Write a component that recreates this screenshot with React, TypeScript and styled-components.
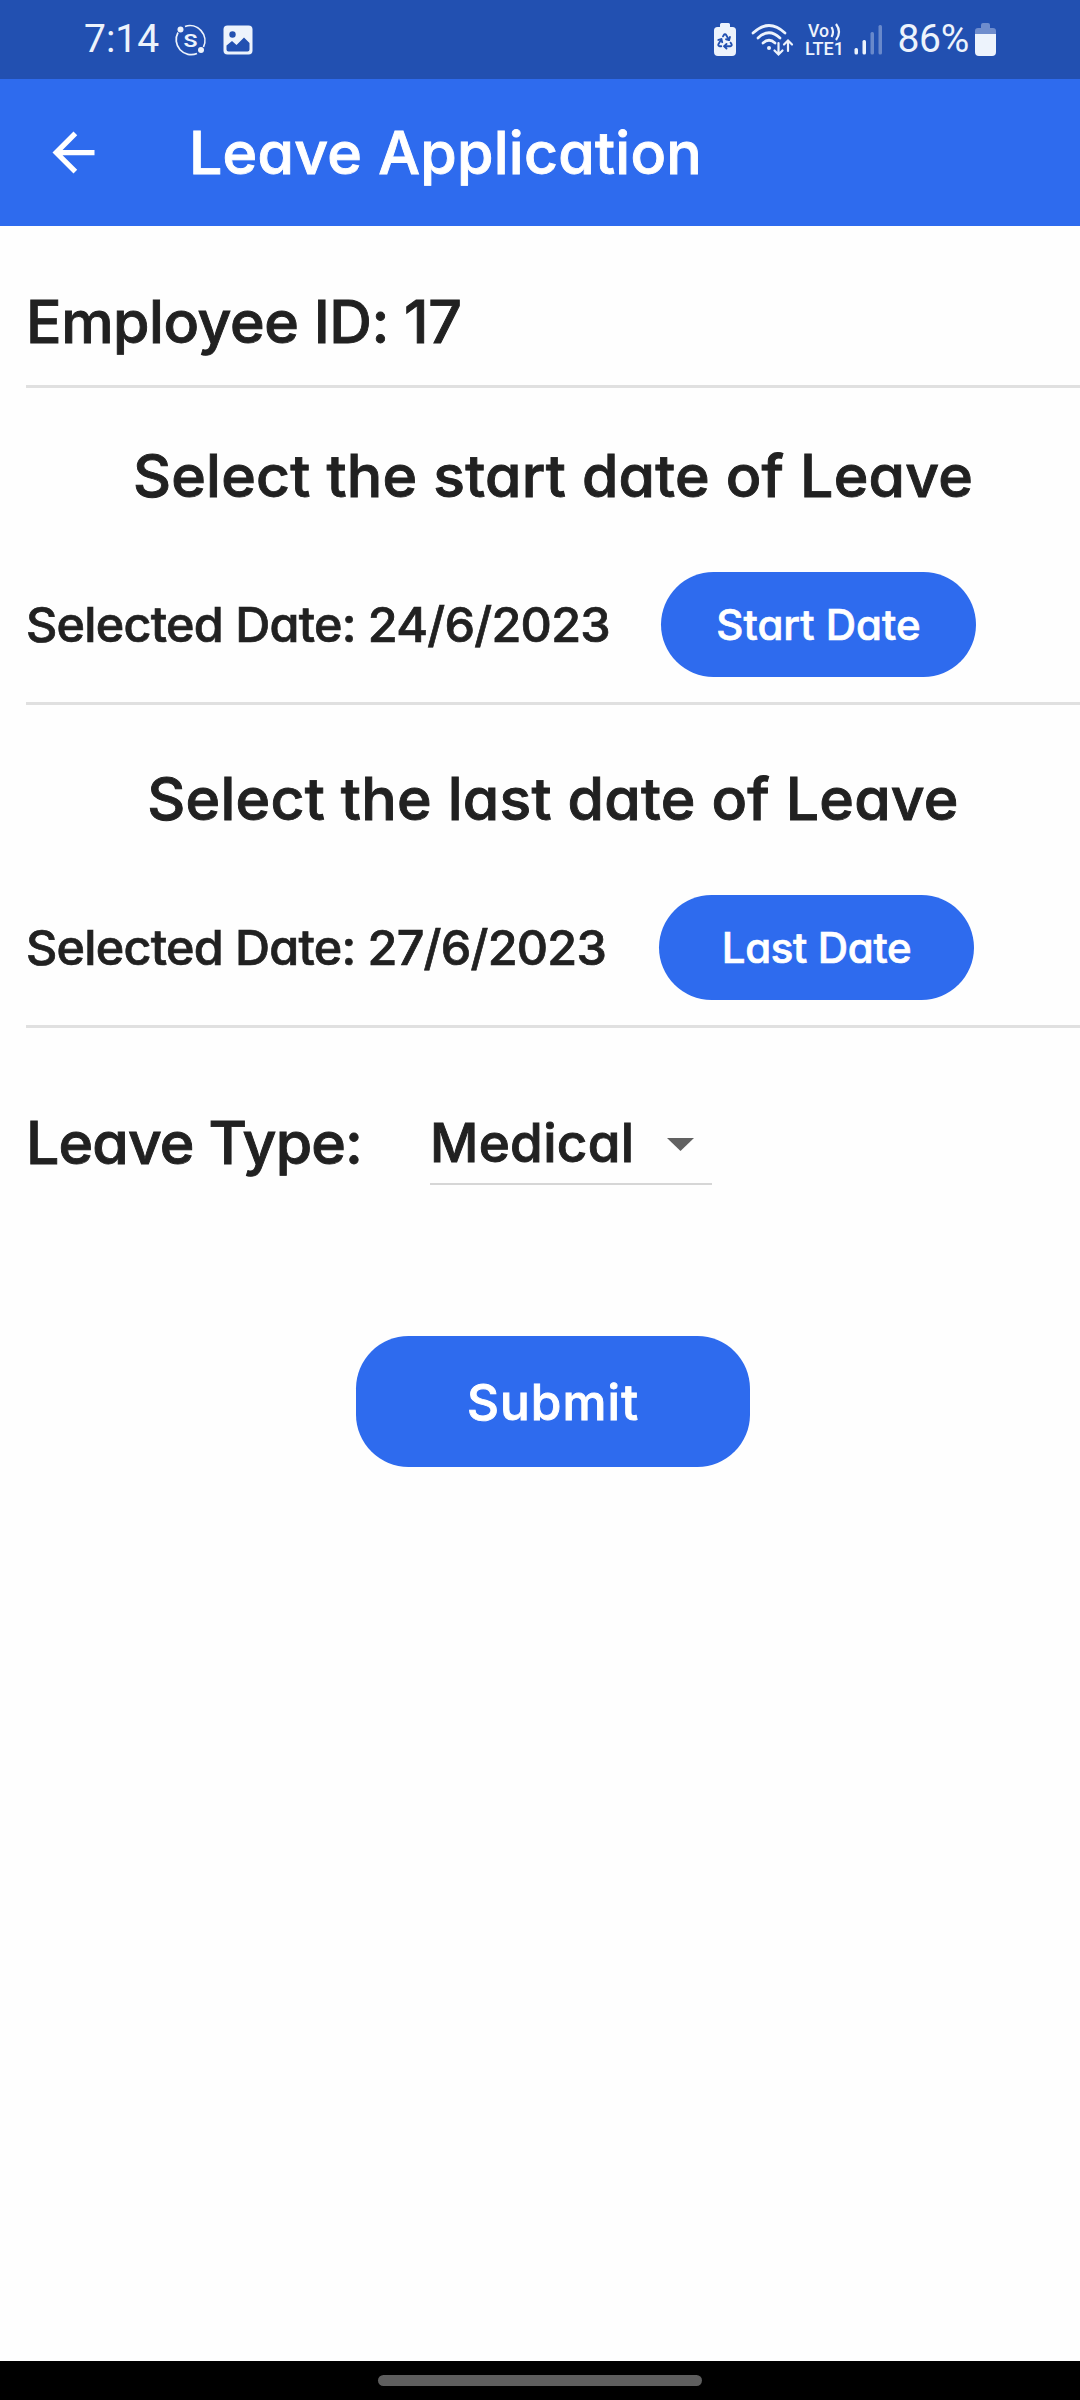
import React from 'react';
import styled, { createGlobalStyle } from 'styled-components';
import { Recycle } from 'lucide-react';

const ink = '#212121';
const blue = '#2e6bee';
const deepBlue = '#2250b1';
const pale = '#edf3fc';

const GlobalStyle = createGlobalStyle`
  * { box-sizing: border-box; }
  body { margin: 0; background: #fff; }
`;

const Screen = styled.div`
  width: 1080px;
  height: 2400px;
  display: flex;
  flex-direction: column;
  background: #fefefe;
  color: ${ink};
  font-family: Inter, 'Liberation Sans', sans-serif;
  font-feature-settings: 'cv11', 'calt' 0;
  overflow: hidden;
`;

const StatusBar = styled.div`
  height: 79px;
  display: flex;
  align-items: center;
  justify-content: space-between;
  padding: 0 84px;
  background: ${deepBlue};
  color: ${pale};
  font-family: Roboto, sans-serif;
`;

const StatusGroup = styled.div`
  display: flex;
  align-items: center;
`;

const StatusText = styled.span<{ $spacing?: number; $left?: number }>`
  margin-left: ${(p) => p.$left ?? 0}px;
  font-size: 39px;
  line-height: 79px;
  white-space: nowrap;
  letter-spacing: ${(p) => p.$spacing ?? 0}px;
`;

const StatusIcon = styled.svg<{ $left: number }>`
  display: block;
  flex: none;
  margin-left: ${(p) => p.$left}px;
  overflow: visible;
`;

const AppBar = styled.header`
  height: 147px;
  display: flex;
  align-items: center;
  padding-left: 42px;
  background: ${blue};
  color: #fff;
`;

const BackIcon = styled.svg`
  display: block;
  width: 63px;
  height: 63px;
  margin-right: 84px;
`;

const Title = styled.h1<{ $spacing: number }>`
  margin: 0;
  font-size: 59px;
  font-weight: 500;
  line-height: 90px;
  white-space: nowrap;
  letter-spacing: ${(p) => p.$spacing}px;
  -webkit-text-stroke: 0.9px currentColor;
`;

const Content = styled.main`
  flex: 1;
  padding-left: 26px;
  display: flex;
  flex-direction: column;
`;

const Section = styled.section<{ $top: number; $bottom?: number }>`
  display: flex;
  flex-direction: column;
  padding: ${(p) => p.$top}px 0 ${(p) => p.$bottom ?? 25}px;
  border-bottom: 3px solid #e0e0e0;
`;

const Heading = styled.h2<{ $spacing: number; $centered?: boolean }>`
  margin: 0;
  font-size: 59px;
  font-weight: 500;
  line-height: 90px;
  white-space: nowrap;
  text-align: ${(p) => (p.$centered ? 'center' : 'left')};
  letter-spacing: ${(p) => p.$spacing}px;
  -webkit-text-stroke: 0.9px currentColor;
`;

const DateRow = styled.div`
  display: flex;
  align-items: center;
  height: 105px;
  margin-top: 51px;
`;

const DateText = styled.div<{ $width: number; $spacing: number }>`
  width: ${(p) => p.$width}px;
  font-size: 48.5px;
  font-weight: 500;
  white-space: nowrap;
  letter-spacing: ${(p) => p.$spacing}px;
  -webkit-text-stroke: 0.7px currentColor;
`;

const PillButton = styled.button<{ $spacing: number }>`
  width: 315px;
  height: 105px;
  padding: 0;
  border: 0;
  border-radius: 52.5px;
  background: ${blue};
  color: #fff;
  font: 500 42px Inter, sans-serif;
  font-feature-settings: inherit;
  white-space: nowrap;
  letter-spacing: ${(p) => p.$spacing}px;
  -webkit-text-stroke: 0.7px currentColor;
`;

const TypeRow = styled.div`
  display: flex;
  height: 87px;
  margin-top: 70px;
  align-items: stretch;
`;

const TypeLabel = styled.div`
  width: 404px;
`;

const Select = styled.div`
  width: 282px;
  display: flex;
  align-items: center;
  justify-content: space-between;
  padding: 4px 18px 0 0;
  border-bottom: 2px solid #d6d6d6;
`;

const SelectValue = styled.span<{ $spacing: number }>`
  font-size: 53px;
  font-weight: 500;
  line-height: 80px;
  letter-spacing: ${(p) => p.$spacing}px;
  -webkit-text-stroke: 0.9px currentColor;
`;

const Caret = styled.svg`
  display: block;
  margin-top: 4px;
`;

const SubmitButton = styled(PillButton)`
  width: 394px;
  height: 131px;
  margin: 151px auto 0;
  font-size: 49.5px;
  -webkit-text-stroke: 0.9px currentColor;
`;

const NavBar = styled.footer`
  height: 39px;
  display: flex;
  justify-content: center;
  padding-top: 14px;
  background: #000;
`;

const HomeHandle = styled.div`
  width: 324px;
  height: 11px;
  border-radius: 5.5px;
  background: #5e5e5e;
`;

function NotificationIcons() {
  return (
    <>
      <StatusIcon $left={16} width="32" height="32" viewBox="0 0 32 32" fill="none" stroke={pale} strokeWidth="1.700">
        <path d="M10 2.500A15 15 0 0 1 28.500 23M22 29.500A15 15 0 0 1 3 8.500" />
        <circle cx="5.500" cy="5.500" r="3" fill={pale} stroke="none" />
        <circle cx="26" cy="26" r="3" fill={pale} stroke="none" />
        <text x="8.500" y="22.500" fill={pale} stroke="none" fontFamily="Roboto, sans-serif" fontWeight="600" fontSize="19" textLength="14" lengthAdjust="spacingAndGlyphs">S</text>
      </StatusIcon>
      <StatusIcon $left={16} width="30" height="30" viewBox="0 0 30 30">
        <rect x="0.500" y="0.500" width="29" height="29" rx="4" fill={pale} />
        <circle cx="9.500" cy="9.500" r="3.200" fill={deepBlue} />
        <path d="M3.500 20.500L9 16L13.500 20L21 12.500L26.500 18V24.500Q26.500 26.500 24.500 26.500H5.500Q3.500 26.500 3.500 24.500Z" fill={deepBlue} />
      </StatusIcon>
    </>
  );
}

function SystemIcons() {
  return (
    <StatusGroup>
      <StatusIcon $left={0} width="22" height="33" viewBox="0 0 22 33" fill="none">
        <path d="M6 4V1.500Q6 0 7.500 0H14.500Q16 0 16 1.500V4H18.500Q22 4 22 7.500V29Q22 33 18 33H4Q0 33 0 29V7.500Q0 4 3.500 4Z" fill={pale} />
        <Recycle x={2} y={9} size={18} color={deepBlue} strokeWidth={2.5} />
      </StatusIcon>
      <StatusIcon $left={15} width="43" height="34" viewBox="0 0 43 34" fill="none" stroke={pale} strokeWidth="2.700" strokeLinecap="round">
        <path d="M2 10Q18 -5 34 10M7 15Q18 4.500 29 15M12 20Q18 14.500 24 20" />
        <circle cx="18" cy="25" r="2" fill={pale} stroke="none" />
        <path d="M27.500 20V31M23.500 27.500L27.500 31.500L31.500 27.500M37 28V18M33 21.500L37 17.500L41 21.500" strokeWidth="2.200" />
      </StatusIcon>
      <StatusIcon $left={11} width="40" height="34" viewBox="0 0 40 34" fill={pale} fontFamily="Roboto, sans-serif" fontWeight="500">
        <text x="3" y="14" fontSize="17.500" textLength="21" lengthAdjust="spacingAndGlyphs">Vo</text>
        <path d="M26.500 4Q29.500 9 26.500 14M31 1Q37 9 31 17" fill="none" stroke={pale} strokeWidth="2.200" />
        <text x="0" y="32" fontSize="18.500" textLength="39" lengthAdjust="spacingAndGlyphs">LTE1</text>
      </StatusIcon>
      <StatusIcon $left={9} width="29" height="30" viewBox="0 0 29 30" fill={pale}>
        <rect x="0.500" y="23" width="3.500" height="6.500" rx="1.500" />
        <rect x="8.500" y="15" width="3.500" height="14.500" rx="1.500" />
        <rect x="16.500" y="7" width="3.500" height="22.500" rx="1.500" opacity=".35" />
        <rect x="24.500" y="0" width="3.500" height="29.500" rx="1.500" opacity=".35" />
      </StatusIcon>
      <StatusText $left={14} $spacing={-0.3}>86%</StatusText>
      <StatusIcon $left={6} width="21" height="33" viewBox="0 0 21 33" fill={pale}>
        <path d="M0 11V8Q0 5 3 5H6V2Q6 0 8 0H13Q15 0 15 2V5H18Q21 5 21 8V11Z" opacity=".38" />
        <path d="M0 11H21V29Q21 33 17 33H4Q0 33 0 29Z" />
      </StatusIcon>
    </StatusGroup>
  );
}

export default function App() {
  return (
    <Screen>
      <GlobalStyle />
      <StatusBar>
        <StatusGroup>
          <StatusText>7:14</StatusText>
          <NotificationIcons />
        </StatusGroup>
        <SystemIcons />
      </StatusBar>
      <AppBar>
        <BackIcon viewBox="0 0 24 24" fill="#fff">
          <path d="M20 11H7.830l5.590-5.590L12 4l-8 8 8 8 1.410-1.410L7.830 13H20v-2z" />
        </BackIcon>
        <Title $spacing={0.25}>Leave Application</Title>
      </AppBar>
      <Content>
        <Section $top={51} $bottom={18}>
          <Heading $spacing={-0.45}>Employee ID: 17</Heading>
        </Section>
        <Section $top={43}>
          <Heading $centered $spacing={0.2}>Select the start date of Leave</Heading>
          <DateRow>
            <DateText $width={635} $spacing={-0.75}>Selected Date: 24/6/2023</DateText>
            <PillButton $spacing={0}>Start Date</PillButton>
          </DateRow>
        </Section>
        <Section $top={49}>
          <Heading $centered $spacing={0.2}>Select the last date of Leave</Heading>
          <DateRow>
            <DateText $width={633} $spacing={-0.77}>Selected Date: 27/6/2023</DateText>
            <PillButton $spacing={-0.35}>Last Date</PillButton>
          </DateRow>
        </Section>
        <TypeRow>
          <TypeLabel>
            <Heading $spacing={-0.85}>Leave Type:</Heading>
          </TypeLabel>
          <Select>
            <SelectValue $spacing={0.3}>Medical</SelectValue>
            <Caret width="27" height="13" viewBox="0 0 27 13">
              <path d="M0 0H27L13.500 13Z" fill="#616161" />
            </Caret>
          </Select>
        </TypeRow>
        <SubmitButton $spacing={1.1}>Submit</SubmitButton>
      </Content>
      <NavBar>
        <HomeHandle />
      </NavBar>
    </Screen>
  );
}
